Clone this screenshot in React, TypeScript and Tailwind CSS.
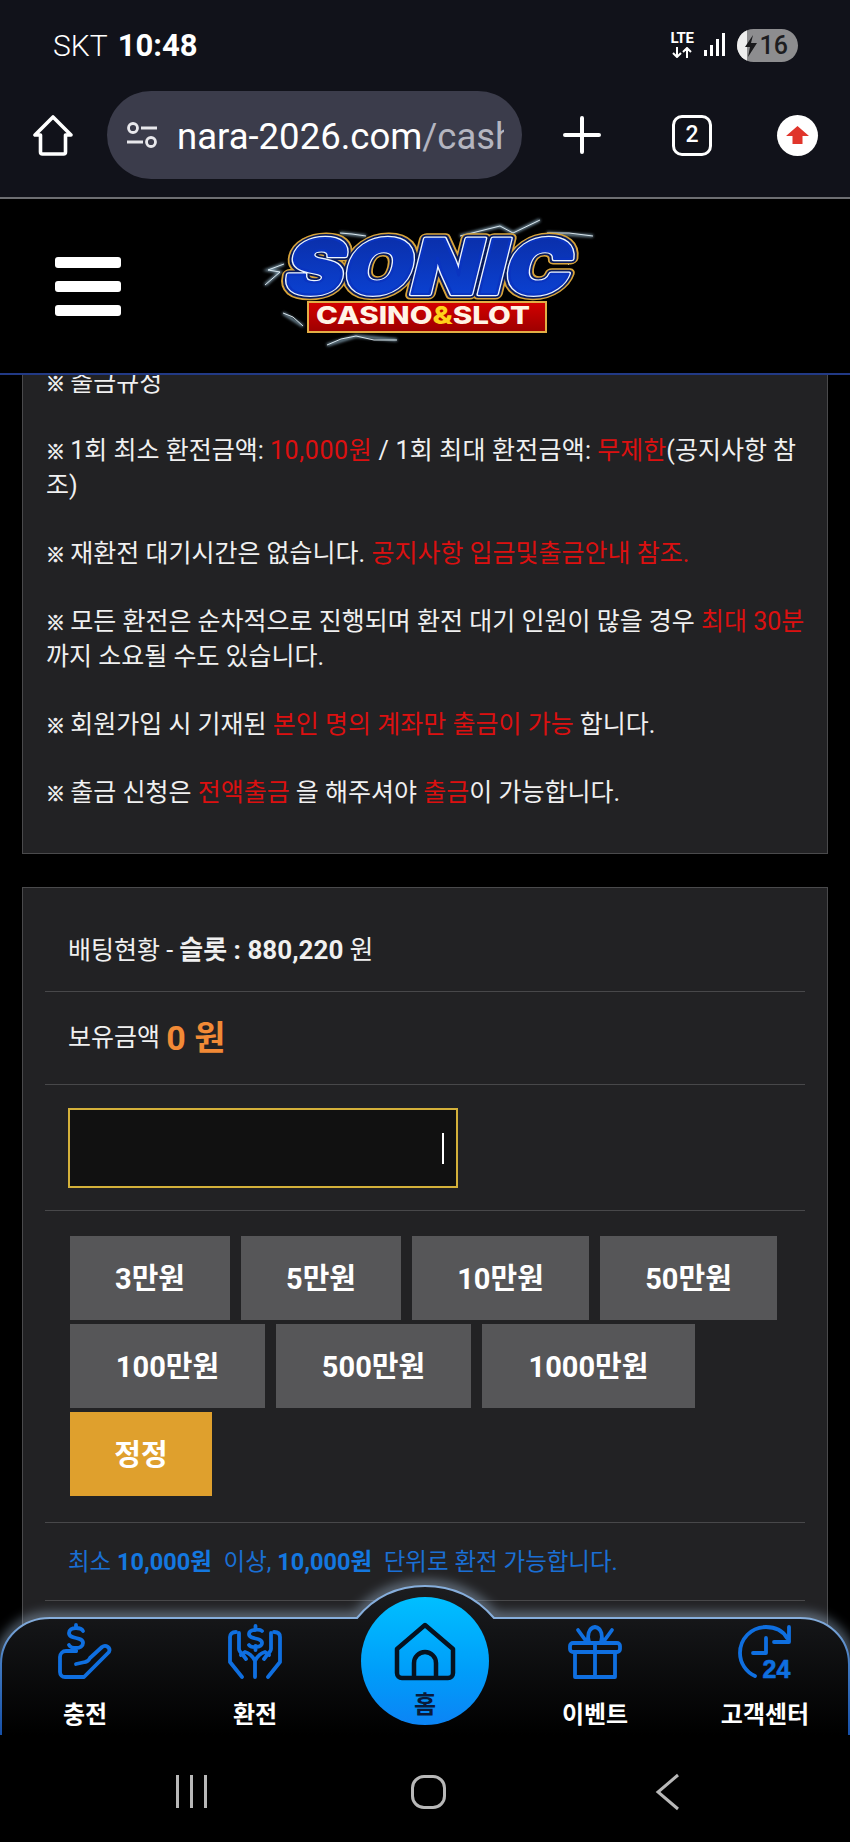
import { ReactNode } from "react";

const font = "font-['Roboto','Noto_Sans_CJK_KR',sans-serif]";

function Red({ children }: { children: ReactNode }) {
  return <span className="text-[#dc1010]">{children}</span>;
}

function Mark() {
  return <span className="text-[19px] leading-none mr-[-1px] [-webkit-text-stroke:0.7px_#f0f0f0]">※</span>;
}

function Logo() {
  return (
    <svg width="360" height="140" viewBox="0 0 360 140" className="block">
      <defs>
        <linearGradient id="blue" x1="0" y1="0" x2="0" y2="1">
          <stop offset="0" stopColor="#0a2aa0" />
          <stop offset="1" stopColor="#0b46dc" />
        </linearGradient>
        <linearGradient id="red" x1="0" y1="0" x2="0" y2="1">
          <stop offset="0" stopColor="#d40000" />
          <stop offset="1" stopColor="#9c0000" />
        </linearGradient>
        <filter id="soft" x="-20%" y="-20%" width="140%" height="140%">
          <feGaussianBlur stdDeviation="1.8" />
        </filter>
      </defs>
      <g fill="none" stroke="#a9cfe6" strokeWidth="2.6" filter="url(#soft)" opacity="0.8">
        <path d="M19 70l15-13-12-2 16-6M37 98l20 13M94 18l26 3M214 21l40-10 13 7 27-13M301 18l46 3M81 130l29-9 41 4" />
      </g>
      <g fill="none" stroke="#e8f4fa" strokeWidth="0.9">
        <path d="M19 70l15-13-12-2 16-6M37 98l10 4 10 9M94 18l12 1 14 2M214 21l20-5 20-5 13 7 27-13M301 18l22 0 24 3M81 130l14-6 15-3 18 4 23 0M330 42l-8 8M320 60l-6 5" />
      </g>
      <g transform="translate(35 79) skewX(-14)" fontFamily="Inter,'Liberation Sans',sans-serif" fontWeight="900" fontSize="76">
        <text textLength="285" lengthAdjust="spacingAndGlyphs" fill="#d9a53a" stroke="#d9a53a" strokeWidth="11" strokeLinejoin="round">SONIC</text>
        <text textLength="285" lengthAdjust="spacingAndGlyphs" fill="#071a5c" stroke="#071a5c" strokeWidth="8" strokeLinejoin="round">SONIC</text>
        <text textLength="285" lengthAdjust="spacingAndGlyphs" fill="#0a2aa0" stroke="#eef6ff" strokeWidth="4.500" strokeLinejoin="round">SONIC</text>
        <text textLength="285" lengthAdjust="spacingAndGlyphs" fill="url(#blue)" stroke="#0a34c0" strokeWidth="2.200" strokeLinejoin="round">SONIC</text>
      </g>
      <rect x="62" y="87" width="238" height="30" fill="url(#red)" stroke="#e2ae45" strokeWidth="2" />
      <text x="70" y="109" fontFamily="Inter,'Liberation Sans',sans-serif" fontWeight="800" fontSize="25" textLength="214" lengthAdjust="spacingAndGlyphs" fill="#fff4e6">
        CASINO<tspan fill="#ffd21a">&amp;</tspan>SLOT
      </text>
    </svg>
  );
}

function NavIcon({ children }: { children: ReactNode }) {
  return (
    <svg width="54" height="54" viewBox="0 0 54 54" fill="none" stroke="#0f6fe0" strokeWidth="3.8" strokeLinecap="round" strokeLinejoin="round" className="overflow-visible">
      {children}
    </svg>
  );
}

function NavItem({ label, icon }: { label: string; icon: ReactNode }) {
  return (
    <div className="flex flex-col items-center w-[130px]">
      {icon}
      <span className="mt-[21px] text-[24px] leading-[30px] font-bold text-white whitespace-nowrap">{label}</span>
    </div>
  );
}

function AmountButton({ label, width, gold }: { label: string; width: string; gold?: boolean }) {
  return (
    <button className={`${width} h-[84px] pt-[4px] text-[29px] font-bold text-white ${gold ? "bg-[#dfa02d]" : "bg-[#565658]"}`}>
      {label}
    </button>
  );
}

export default function App() {
  return (
    <div className={`relative w-[850px] h-[1842px] overflow-hidden bg-black flex flex-col ${font}`}>
      {/* browser chrome */}
      <div className="h-[199px] shrink-0 bg-[#11121a] border-b-2 border-[#6d6e72]">
        <div className="h-[91px] pl-[53px] pr-[52px] pt-[27px] flex items-start justify-between">
          <div className="flex items-baseline gap-[10px] text-white text-[30px] leading-[38px]">
            <span className="font-light">SKT</span>
            <span className="font-bold text-[31px]">10:48</span>
          </div>
          <div className="flex items-start mt-[2px]">
            <div className="flex flex-col items-center text-white mt-[3px] w-[26px]">
              <span className="text-[15px] leading-[13px] font-bold tracking-tight">LTE</span>
              <svg width="22" height="11" viewBox="0 0 22 11" fill="none" stroke="#fff" strokeWidth="2" className="mt-[2px]">
                <path d="M6 0v9M2 6l4 4 4-4M16 11V2M12 5l4-4 4 4" />
              </svg>
            </div>
            <svg width="22" height="24" viewBox="0 0 22 24" fill="#fff" className="ml-[9px] mt-[3px]">
              <rect x="0" y="18" width="3" height="6" />
              <rect x="6" y="13" width="3" height="11" />
              <rect x="12" y="7" width="3" height="17" />
              <rect x="18" y="1" width="3" height="23" />
            </svg>
            <div className="relative ml-[11px] w-[61px] h-[33px] rounded-full bg-[#8d8d8f] overflow-hidden flex items-center justify-end pr-[10px]">
              <div className="absolute left-0 top-0 bottom-0 w-[10px] bg-[#eeeeee]" />
              <svg width="12" height="22" viewBox="0 0 12 22" fill="#1a1a1c" className="absolute left-[8px] top-[6px]">
                <path d="M8 0L0 12h5l-2 10 9-14H6z" />
              </svg>
              <span className="text-[#1d1d1f] text-[25px] font-medium leading-none">16</span>
            </div>
          </div>
        </div>
        <div className="flex items-center h-[88px] pl-[33px]">
          <svg width="40" height="41" viewBox="0 0 40 41" fill="none" stroke="#fff" strokeWidth="3.6" strokeLinejoin="round" className="shrink-0">
            <path d="M20 2L2 20h5.500v17a2 2 0 0 0 2 2h21a2 2 0 0 0 2-2V20H38z" />
          </svg>
          <div className="ml-[34px] w-[415px] h-[88px] rounded-full bg-[#3b3c4b] flex items-center pl-[19px] shrink-0 overflow-hidden">
            <svg width="32" height="28" viewBox="0 0 32 28" fill="none" stroke="#e8e8ec" strokeWidth="2.8" className="shrink-0">
              <circle cx="7" cy="7" r="4.500" />
              <path d="M15 7h16M1 21h16" />
              <circle cx="25" cy="21" r="4.500" />
            </svg>
            <div className="ml-[19px] mt-[4px] w-[327px] overflow-hidden whitespace-nowrap text-[36.500px] leading-[46px] text-white">
              nara-2026.com<span className="text-[#b4b5c0]">/cash</span>
            </div>
          </div>
          <svg width="38" height="38" viewBox="0 0 38 38" fill="none" stroke="#fff" strokeWidth="4" strokeLinecap="round" className="ml-[41px] shrink-0">
            <path d="M19 2v34M2 19h34" />
          </svg>
          <div className="ml-[71px] w-[40px] h-[41px] rounded-[10px] border-[3.5px] border-white flex items-center justify-center text-white text-[23px] font-medium shrink-0">
            2
          </div>
          <div className="ml-[65px] w-[41px] h-[41px] rounded-full bg-white flex items-center justify-center shrink-0">
            <svg width="25" height="24" viewBox="0 0 25 24" fill="#e0352b">
              <path d="M12.500 3L24 13h-6.500v8h-10v-8H1z" />
            </svg>
          </div>
        </div>
      </div>

      {/* site header */}
      <div className="h-[176px] shrink-0 bg-black border-b-2 border-[#223a86] flex items-center relative z-10">
        <div className="ml-[55px] w-[66px] flex flex-col gap-[13px]">
          <div className="h-[11px] rounded-[3px] bg-white" />
          <div className="h-[11px] rounded-[3px] bg-white" />
          <div className="h-[11px] rounded-[3px] bg-white" />
        </div>
        <div className="ml-[125px] mt-[-2px]">
          <Logo />
        </div>
      </div>

      {/* page content */}
      <div className="flex-1 min-h-0 overflow-hidden px-[22px]">
        <div className="mt-[-10px] h-[489px] border border-[#4a4a4c] bg-[#222224] pl-[23px] pr-[18px] text-[25px] leading-[34.200px] text-[#f0f0f0]">
          <Mark /> 출금규정
          <br />
          <br />
          <Mark /> 1회 최소 환전금액: <Red><span className="tracking-[0.6px]">10,000원</span></Red> <span className="tracking-[0.2px]">/ 1회 최대 환전금액:</span> <Red>무제한</Red>(공지사항 참조)
          <br />
          <br />
          <Mark /> 재환전 대기시간은 없습니다. <Red>공지사항 입금및출금안내 참조.</Red>
          <br />
          <br />
          <Mark /> 모든 환전은 순차적으로 진행되며 환전 대기 인원이 많을 경우 <Red>최대 30분</Red>까지 소요될 수도 있습니다.
          <br />
          <br />
          <Mark /> 회원가입 시 기재된 <Red>본인 명의 계좌만 출금이 가능</Red> 합니다.
          <br />
          <br />
          <Mark /> 출금 신청은 <Red>전액출금</Red> 을 해주셔야 <Red>출금</Red>이 가능합니다.
        </div>

        <div className="mt-[33px] border border-[#4a4a4c] bg-[#222224] px-[22px] h-[900px] text-[#f0f0f0]">
          <div className="h-[104px] border-b border-[#48484a] flex items-center pt-[22px] pl-[23px] text-[25px]">
            배팅현황 -&nbsp;<b className="font-bold text-[26px]">슬롯 : 880,220</b>&nbsp;<span className="text-[26px]">원</span>
          </div>
          <div className="h-[93px] border-b border-[#48484a] flex items-center pl-[23px] text-[25px]">
            보유금액&nbsp;
            <b className="font-bold text-[34px] text-[#f28a36]">0 원</b>
          </div>
          <div className="h-[126px] border-b border-[#48484a] flex items-center pl-[23px]">
            <div className="relative w-[390px] h-[80px] border-2 border-[#d4b13a] bg-[#111111]">
              <div className="absolute right-[12px] top-[23px] w-[2px] h-[31px] bg-white" />
            </div>
          </div>
          <div className="h-[312px] border-b border-[#48484a] pt-[25px] pl-[25px]">
            <div className="flex flex-wrap gap-x-[11px] gap-y-[4px]">
              <AmountButton label="3만원" width="w-[160px]" />
              <AmountButton label="5만원" width="w-[160px]" />
              <AmountButton label="10만원" width="w-[177px]" />
              <AmountButton label="50만원" width="w-[177px]" />
              <AmountButton label="100만원" width="w-[195px]" />
              <AmountButton label="500만원" width="w-[195px]" />
              <AmountButton label="1000만원" width="w-[213px]" />
              <AmountButton label="정정" width="w-[142px]" gold />
            </div>
          </div>
          <div className="h-[78px] border-b border-[#48484a] flex items-center pt-[3px] pl-[23px] text-[23.500px] text-[#1a6fd4] whitespace-pre">
            최소 <b className="font-bold text-[#1478e0]">10,000원</b>  이상, <b className="font-bold text-[#1478e0]">10,000원</b>  단위로 환전 가능합니다.
          </div>
        </div>
      </div>

      {/* bottom tab bar */}
      <div className="absolute left-0 right-0 top-[1580px] h-[155px]">
        <svg width="850" height="155" viewBox="0 0 850 155" className="absolute inset-0 overflow-visible" fill="none">
          <defs>
            <linearGradient id="nav" x1="0" y1="0" x2="0" y2="1">
              <stop offset="0" stopColor="#1c1d20" />
              <stop offset="0.3" stopColor="#131416" />
              <stop offset="1" stopColor="#000" />
            </linearGradient>
            <linearGradient id="edge" gradientUnits="userSpaceOnUse" x1="0" y1="38" x2="0" y2="155">
              <stop offset="0" stopColor="#86aedc" />
              <stop offset="0.4" stopColor="#3f78c0" />
              <stop offset="1" stopColor="#1650a8" />
            </linearGradient>
            <filter id="glow" x="-5%" y="-40%" width="110%" height="180%">
              <feGaussianBlur stdDeviation="6" />
            </filter>
          </defs>
          <path d="M1 155V84C1 58 22 38 50 38H357C375 16 398 6 425 6C452 6 475 16 494 38H800C828 38 849 58 849 84V155" stroke="#b7d4f2" strokeWidth="10" opacity="0.5" filter="url(#glow)" />
          <path d="M1 155V84C1 58 22 38 50 38H357C375 16 398 6 425 6C452 6 475 16 494 38H800C828 38 849 58 849 84V155Z" fill="url(#nav)" />
          <path d="M1 155V84C1 58 22 38 50 38H357C375 16 398 6 425 6C452 6 475 16 494 38H800C828 38 849 58 849 84V155" stroke="url(#edge)" strokeWidth="2" />
        </svg>

        <div className="absolute left-[20px] right-[20px] top-[45px] flex justify-between">
          <div className="flex gap-[40px]">
            <NavItem
              label="충전"
              icon={
                <NavIcon>
                  <path d="M25 6c-1-2-4-3-7-3c-4 0-7 2-7 5c0 7 14 3 14 10c0 3-3 5-7 5c-3 0-6-1-7-3M18 0v3M18 23v3" />
                  <path d="M18 26H8a6 6 0 0 0-6 6v15a5 5 0 0 0 5 5h19L51 27c2-4-3-8-7-5L32 33c-1 2-3 4-5 4l-9 2" />
                </NavIcon>
              }
            />
            <NavItem
              label="환전"
              icon={
                <NavIcon>
                  <path d="M34 6c-2-2-13-2-13 3c0 6 13 3 13 9c0 5-11 5-13 2M27.500 1v4M27.500 21v4" />
                  <path d="M8 7C4 7 2 9 2 12v25l12 15M46 7c4 0 6 2 6 5v25l-12 15" />
                  <path d="M11 8v16c0 2 2 4 4 6l3 4M43 8v16c0 2-2 4-4 6l-3 4" />
                  <path d="M27 52V36c-2-4-6-8-10-9l-4 3M27 36c2-4 6-8 10-9l4 3" />
                </NavIcon>
              }
            />
          </div>
          <div className="flex gap-[40px]">
            <NavItem
              label="이벤트"
              icon={
                <NavIcon>
                  <rect x="2" y="18" width="50" height="9" rx="3" />
                  <path d="M7 27v25h40V27M27 18v34" />
                  <path d="M21 17c-2-5-1-14 6-15c7 1 8 10 6 15M10 5l8 11M44 5l-8 11" />
                </NavIcon>
              }
            />
            <NavItem
              label="고객센터"
              icon={
                <NavIcon>
                  <path d="M49 13C45 6 37 2 28 2C13 2 2 14 2 28c0 10 6 19 15 23M51 2v15H36M28 13v15H15" />
                  <text x="24.500" y="53" fontFamily="'Liberation Sans',sans-serif" fontWeight="700" fontSize="25" fill="#0f6fe0" stroke="#0f6fe0" strokeWidth="0.6">24</text>
                </NavIcon>
              }
            />
          </div>
        </div>

        <div className="absolute left-[361px] top-[17px] w-[128px] h-[128px] rounded-full bg-gradient-to-b from-[#00bfff] to-[#0c84f5] flex flex-col items-center">
          <svg width="62" height="59" viewBox="0 0 62 59" fill="none" stroke="#06121f" strokeWidth="4.500" strokeLinejoin="round" className="mt-[25px] shrink-0">
            <path d="M31 3L3 27v24a5 5 0 0 0 5 5h46a5 5 0 0 0 5-5V27zM20 56V41a11 11 0 0 1 22 0v15" />
          </svg>
          <span className="mt-[9px] text-[24px] leading-[30px] font-bold text-[#0a1a3a]">홈</span>
        </div>
      </div>

      {/* android nav */}
      <div className="absolute left-0 right-0 top-[1735px] h-[107px] bg-black">
        <div className="absolute left-[176px] top-[40px] flex gap-[11px]">
          <div className="w-[3px] h-[33px] bg-[#b8b8b8]" />
          <div className="w-[3px] h-[33px] bg-[#b8b8b8]" />
          <div className="w-[3px] h-[33px] bg-[#b8b8b8]" />
        </div>
        <div className="absolute left-[411px] top-[40px] w-[35px] h-[34px] rounded-[13px] border-[3px] border-[#b8b8b8]" />
        <svg width="26" height="38" viewBox="0 0 26 38" fill="none" stroke="#b8b8b8" strokeWidth="3" className="absolute left-[655px] top-[38px]">
          <path d="M23 2L3 19l20 17" />
        </svg>
      </div>
    </div>
  );
}
